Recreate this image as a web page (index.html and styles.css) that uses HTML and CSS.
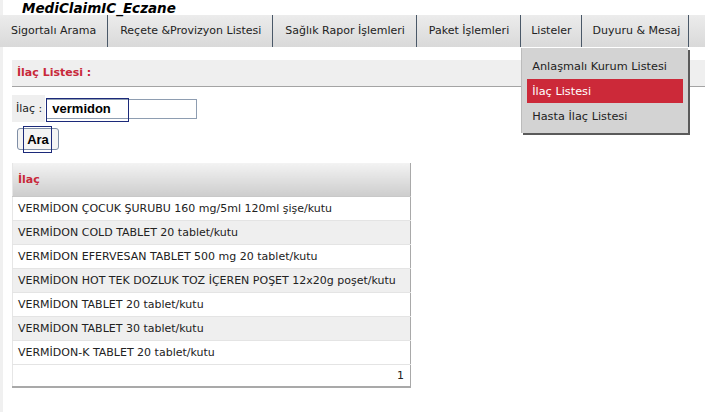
FILE: index.html
```html
<!DOCTYPE html>
<html lang="tr">
<head>
  <meta charset="UTF-8">
  <title>MediClaimIC_Eczane</title>
  <link rel="stylesheet" href="styles.css">
</head>
<body>
  <div class="page">
    <div class="brand">MediClaimIC_Eczane</div>
    <ul class="menu">
      <li>Sigortalı Arama</li>
      <li>Reçete &amp;Provizyon Listesi</li>
      <li>Sağlık Rapor İşlemleri</li>
      <li>Paket İşlemleri</li>
      <li class="has-sub">Listeler
        <ul class="submenu">
          <li>Anlaşmalı Kurum Listesi</li>
          <li class="selected">İlaç Listesi</li>
          <li>Hasta İlaç Listesi</li>
        </ul>
      </li>
      <li>Duyuru &amp; Mesaj</li>
    </ul>

    <div class="content">
      <div class="panel-title">İlaç Listesi :</div>

      <div class="search-row">
        <label for="ilac" class="search-label">İlaç :</label>
        <span class="input-wrap">
          <input type="text" id="ilac" value="vermidon">
          <span class="focus-box"></span>
        </span>
      </div>
      <div class="button-row">
        <button type="button" class="btn">Ara<span class="focus-box"></span></button>
      </div>

      <table class="grid">
        <thead>
          <tr><th>İlaç</th></tr>
        </thead>
        <tbody>
          <tr><td>VERMİDON ÇOCUK ŞURUBU 160 mg/5ml 120ml şişe/kutu</td></tr>
          <tr class="alt"><td>VERMİDON COLD TABLET 20 tablet/kutu</td></tr>
          <tr><td>VERMİDON EFERVESAN TABLET 500 mg 20 tablet/kutu</td></tr>
          <tr class="alt"><td>VERMİDON HOT TEK DOZLUK TOZ İÇEREN POŞET 12x20g poşet/kutu</td></tr>
          <tr><td>VERMİDON TABLET 20 tablet/kutu</td></tr>
          <tr class="alt"><td>VERMİDON TABLET 30 tablet/kutu</td></tr>
          <tr><td>VERMİDON-K TABLET 20 tablet/kutu</td></tr>
          <tr class="pager"><td>1</td></tr>
        </tbody>
      </table>
    </div>
  </div>
</body>
</html>
```

FILE: styles.css
```css
body {
  margin: 0;
  font-family: "DejaVu Sans", Tahoma, sans-serif;
  font-size: 11px;
  color: #222;
  background: #fff;
}
.page {
  border-left: 3px solid #f0f0f0;
  min-height: 412px;
  box-sizing: border-box;
}
.brand {
  height: 15px;
  line-height: 16px;
  padding-left: 19px;
  font-size: 13.5px;
  font-weight: bold;
  font-style: italic;
  color: #000;
}

/* top navigation */
.menu {
  list-style: none;
  margin: 0 0 0 -3px;
  padding: 0;
  display: flex;
  height: 32px;
  background: linear-gradient(#ececec, #d9d9d9);
}
.menu > li {
  position: relative;
  padding: 0 11px 0 12px;
  line-height: 32px;
  color: #222;
  border-right: 1px solid #4a5868;
  white-space: nowrap;
}
.menu > li:first-child {
  padding-left: 11px;
}
.menu > li:last-child {
  padding: 0 8px 0 11px;
}
.menu > li.has-sub {
  padding: 0 9px 0 10px;
}
.submenu {
  list-style: none;
  position: absolute;
  top: 33px;
  left: 0;
  width: 156px;
  margin: 0;
  padding: 6px 5px 5px;
  background: #d3d3d3;
  border-left: 1px solid #bbb;
  box-shadow: 2px 2px 0 #5a5a5a;
  z-index: 2;
}
.submenu li {
  height: 24px;
  line-height: 25px;
  padding-left: 5px;
  font-size: 11.3px;
  color: #222;
}
.submenu li.selected {
  background: #cc2939;
  color: #fff;
  margin: 1px 0;
}

.content {
  padding: 13px 0 0 9px;
}
.panel-title {
  height: 26px;
  line-height: 26px;
  padding-left: 5px;
  background: #efefef;
  border-bottom: 1px solid #a4a4a4;
  color: #c8283a;
  font-weight: bold;
}

/* search form */
.search-row {
  display: flex;
  align-items: center;
  margin-top: 8px;
}
.search-label {
  background: #efefef;
  padding: 0 3px 0 4px;
  line-height: 27px;
}
.input-wrap {
  position: relative;
  margin-left: 1px;
}
.input-wrap input {
  display: block;
  box-sizing: border-box;
  width: 151px;
  height: 20px;
  margin: 0;
  padding: 0 5px;
  border: 1px solid #8e9db1;
  font-family: "Liberation Sans", Arial, sans-serif;
  font-size: 13px;
  font-weight: bold;
  color: #000;
  outline: none;
}
.focus-box {
  position: absolute;
  border: 1px solid #1c2a7a;
  pointer-events: none;
}
.input-wrap .focus-box {
  left: 0;
  top: -1px;
  width: 81px;
  height: 22px;
}
.button-row {
  padding: 6px 0 0 5px;
}
.btn {
  position: relative;
  width: 42px;
  height: 22px;
  padding: 0;
  background: #f4f4f4;
  border: 1px solid #7f8ea6;
  border-radius: 3px;
  font-family: "Liberation Sans", Arial, sans-serif;
  font-size: 13px;
  font-weight: bold;
  color: #000;
}
.btn .focus-box {
  left: 5px;
  top: -3px;
  width: 27px;
  height: 25px;
}

/* result grid */
.grid {
  margin-top: 13px;
  width: 399px;
  border-collapse: collapse;
  border-right: 1px solid #a9a9a9;
  border-bottom: 2px solid #a9a9a9;
  border-left: 1px solid #e6e6e6;
}
.grid th {
  height: 33px;
  padding: 0 5px;
  text-align: left;
  background: linear-gradient(#f3f3f3, #cdcdcd);
  color: #c8283a;
  font-weight: bold;
  border-bottom: 1px solid #c8c8c8;
}
.grid td {
  height: 23px;
  padding: 0 5px;
  white-space: nowrap;
  border-bottom: 1px solid #e4e4e4;
  color: #222;
}
.grid tr.alt td {
  background: #efefef;
}
.grid tr.pager td {
  height: 21px;
  text-align: right;
  padding-right: 6px;
}
```
